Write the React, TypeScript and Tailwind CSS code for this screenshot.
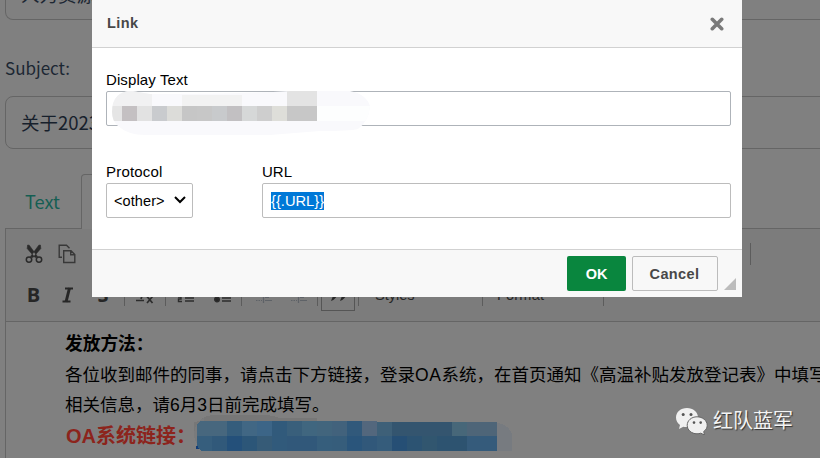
import type { ReactNode } from "react";

const CJK = "font-['Noto_Sans_CJK_SC',sans-serif]";
const UI = "font-['Liberation_Sans','Noto_Sans_CJK_SC',sans-serif]";

function Cell({ className, children }: { className: string; children?: ReactNode }) {
  return <div className={`flex shrink-0 items-center justify-center ${className}`}>{children}</div>;
}

function Sep({ className = "" }: { className?: string }) {
  return <div className={`h-[22px] w-px shrink-0 bg-[#5c5c5c] ${className}`} />;
}

function CutIcon() {
  return (
    <svg width="18" height="20" viewBox="0 0 18 20" fill="none" stroke="#2a2a2a">
      <path d="M2.6 1L4.2 1.2L12.5 12.5L10 13.5L2.2 4.5ZM15.4 1L13.8 1.2L5.5 12.5L8 13.5L15.8 4.5Z" fill="#2a2a2a" strokeWidth="0.6" />
      <circle cx="4" cy="15.6" r="2.7" strokeWidth="1.5" />
      <circle cx="14" cy="15.6" r="2.7" strokeWidth="1.5" />
    </svg>
  );
}

function CopyIcon() {
  return (
    <svg width="18" height="20" viewBox="0 0 18 20" fill="none" stroke="#383838" strokeWidth="1.4">
      <path d="M4 13.3H1.2V1.2H8.5L11.5 4.2" />
      <path d="M5.7 6.7H13L16.8 10.5V18.5H5.7Z M12.7 6.7V10.8H16.8" />
    </svg>
  );
}

function ListIcon({ kind }: { kind: "number" | "bullet" }) {
  return (
    <svg width="18" height="18" viewBox="0 0 18 18" stroke="#2c2c2c" fill="none" strokeWidth="1.4">
      <path d="M8 4.5H17M8 7.5H17M8 12H17M8 15H17" />
      {kind === "bullet" ? (
        <>
          <circle cx="3" cy="6" r="2.3" fill="#262626" />
          <circle cx="3" cy="13.5" r="2.3" fill="#262626" />
        </>
      ) : (
        <path d="M2 2H3.5V7M1 11H4V13H1.5V15.5H5" />
      )}
    </svg>
  );
}

function IndentIcon() {
  return (
    <svg width="17" height="18" viewBox="0 0 17 18" stroke="#5e6267" fill="none" strokeWidth="1.2">
      <path d="M8.5 1V17" />
      <path d="M10 4H15M10 8H15M10 11.5H14M10 14.5H17" />
      <path d="M1 14.5H7" strokeDasharray="1.5 1" />
    </svg>
  );
}

function EditorPage() {
  return (
    <div className="flex h-[458px] w-[820px] flex-col overflow-hidden bg-[#808080]">
      <div className={`ml-[5px] flex h-[20px] w-[830px] shrink-0 items-end rounded-b-[8px] border border-t-0 border-[#656565] pl-[15px] text-[18.5px] text-[#1c2733] ${CJK}`}>
        <span className="mb-[12px] leading-[26px]">人力资源部</span>
      </div>
      <div className={`ml-[5px] h-[76px] shrink-0 pt-[34px] text-[17px] leading-[28px] text-[#1c2733] ${CJK}`}>Subject:</div>
      <div className={`ml-[5px] flex h-[53px] w-[830px] shrink-0 items-center rounded-[8px] border border-[#656565] pl-[15px] text-[18.5px] text-[#17202c] ${CJK}`}>
        关于2023年高温补贴发放通知
      </div>
      <div className="ml-[5px] mt-[25px] flex h-[55px] shrink-0">
        <div className={`flex w-[76px] items-center border-b border-[#656565] pl-[20px] pt-[2px] text-[18.2px] text-[#155e53] ${CJK}`}>Text</div>
        <div className="w-[100px] rounded-t-[4px] border border-b-0 border-[#656565]" />
        <div className="flex-1 border-b border-[#656565]" />
      </div>
      <div className="ml-[5px] h-[93px] shrink-0 border-b border-l border-[#656565] bg-[#7c7c7c]">
        <div className="flex h-[50px] items-center">
          <Cell className="ml-[11px] w-[34px]"><CutIcon /></Cell>
          <Cell className="w-[32px]"><CopyIcon /></Cell>
          <Sep className="ml-[667px]" />
        </div>
        <div className={`mt-px flex h-[30px] items-center text-[#262626] ${UI}`}>
          <Cell className="ml-[10px] w-[35px] text-[20px] font-bold font-['Open_Sans',sans-serif]">B</Cell>
          <Cell className="w-[33px]">
            <svg width="14" height="16" viewBox="0 0 14 16" fill="none" stroke="#262626">
              <path d="M4 1.5H12M1.5 14.5H9.5" strokeWidth="2" />
              <path d="M8.5 1L5 15" strokeWidth="3" />
            </svg>
          </Cell>
          <Cell className="w-[38px] text-[20px] font-bold line-through font-['Open_Sans',sans-serif]">S</Cell>
          <Sep className="ml-[2px]" />
          <Cell className="w-[40px]">
            <svg width="18" height="20" viewBox="0 0 18 20" fill="none" stroke="#2c2c2c" strokeWidth="1.7">
              <path d="M3 2H14M9 2L5 14M0 15.5H8M11 11.5L16.5 18M16.5 11.5L11 18" />
            </svg>
          </Cell>
          <Sep />
          <Cell className="w-[40px]"><ListIcon kind="number" /></Cell>
          <Cell className="w-[33px]"><ListIcon kind="bullet" /></Cell>
          <Sep className="ml-[2px]" />
          <Cell className="w-[42px]"><IndentIcon /></Cell>
          <Cell className="w-[29px]"><IndentIcon /></Cell>
          <Sep className="ml-[4px]" />
          <Cell className="-mt-[2px] ml-[3px] h-[34px] w-[34px] self-center border border-[#555]">
            <svg className="mt-[4px]" width="18" height="14" viewBox="0 0 18 14" fill="#262626">
              <path d="M2 1H8V6Q7 10 2 12L4 7H2ZM11 1H17V6Q16 10 11 12L13 7H11Z" />
            </svg>
          </Cell>
          <Sep className="ml-[3px]" />
          <div className="ml-[16px] w-[107px] pt-[2px] text-[14.5px]">Styles</div>
          <Sep />
          <div className="ml-[14px] w-[106px] pt-[2px] text-[14.5px] tracking-[0.2px]">Format</div>
          <Sep />
        </div>
      </div>
      <div className={`ml-[5px] flex-1 whitespace-nowrap border-l border-[#656565] pl-[59px] pt-[7px] text-[17.5px] leading-[30.7px] text-black ${UI}`}>
        <p className="text-[17.7px] font-bold">发放方法：</p>
        <p>各位收到邮件的同事，请点击下方链接，登录<span className="tracking-[0.6px]">OA</span>系统，在首页通知《高温补贴发放登记表》中填写</p>
        <p>相关信息，请6月3日前完成填写。</p>
        <p className="pl-px text-[20px] font-bold text-[#8c241c]">OA系统链接：</p>
      </div>
    </div>
  );
}

const linkTop = ["#47677e", "#47677e", "#355d7c", "#416784", "#3c6587", "#315a7b", "#395f7b", "#40667f", "#42657d", "#42627c", "#31597b", "#53677d", "#3e6078", "#34556f", "#34556f", "#34556f", "#34556f", "#476779", "#4e6578", "#4e6578"];
const linkLow = ["#365e7d", "#31597a", "#24507a", "#2c5678", "#365b77", "#315a7b", "#31587a", "#31587a", "#365e7c", "#365d7b", "#2a557b", "#31587a", "#355c7b", "#264f75", "#2c5372", "#31566f", "#2d5370", "#2d5370", "#355b7b", "#355b7b"];

function LinkRedaction() {
  return (
    <svg className="absolute left-[194px] top-[413px]" width="320" height="40" viewBox="194 413 320 40" shapeRendering="crispEdges">
      <path d="M194 434Q196 415 216 415H262Q274 415 279 418H317V422H194Z" fill="#777" />
      <path d="M194 434Q195 421 204 418V448Q195 447 194 434Z" fill="#7a7b7c" />
      <path d="M497 423Q508 424 512 434V451H497Z" fill="#777b80" />
      {linkTop.map((c, i) => <rect key={i} x={197 + i * 15} y={i < 12 ? 421 : 422} width="15" height="15" fill={c} />)}
      {linkLow.map((c, i) => <rect key={i} x={197 + i * 15} y="436" width="15" height="15" fill={c} />)}
      <path d="M196 446L201 451H196Z" fill="#808080" />
      <path d="M196 446H198L199 449H196Z" fill="#123d78" />
      <path d="M197 421H200L197 425Z" fill="#777" />
    </svg>
  );
}

const nameLow: [number, number, string][] = [
  [112, 10, "#e5e5e5"], [122, 15, "#c4c0c2"], [137, 15, "#e2e2e2"], [152, 15, "#c9cbce"], [167, 15, "#dcdcd9"],
  [182, 15, "#c6c6c6"], [197, 15, "#c7c7c7"], [212, 15, "#c8cacc"], [227, 15, "#c2c0c2"], [242, 15, "#d6d8d8"],
  [257, 15, "#cecece"], [272, 15, "#deded9"], [287, 30, "#c7c7c7"], [317, 54, "#fdfefe"],
];

function NameRedaction() {
  return (
    <svg className="absolute left-[18px] top-[89px]" width="262" height="48" viewBox="110 89 262 48">
      <clipPath id="smear">
        <path d="M112 112Q112 91 132 91L150 94Q240 94 290 91H350Q366 94 370 106Q369 121 358 129Q350 131 320 131L270 135H145Q128 135 118 126Q112 121 112 112Z" />
      </clipPath>
      <g clipPath="url(#smear)" shapeRendering="crispEdges">
        <rect x="110" y="89" width="262" height="48" fill="#f9f9fc" />
        <rect x="110" y="89" width="42" height="17" fill="#f1f1f2" />
        <rect x="182" y="95" width="60" height="11" fill="#f2f2f2" />
        <rect x="287" y="89" width="30" height="17" fill="#e3e3e3" />
        {nameLow.map(([x, w, c]) => <rect key={x} x={x} y="106" width={w} height="15" fill={c} />)}
      </g>
    </svg>
  );
}

function LinkDialog() {
  return (
    <div className={`absolute left-[92px] top-0 flex h-[297px] w-[650px] flex-col bg-white text-[15px] leading-[18px] text-black ${UI}`}>
      <div className="flex h-[48px] items-center justify-between border-b border-[#d1d1d1] bg-[#f8f8f8] pl-[15px] pr-[18px] text-[#484848]">
        <span className="mb-[2px] text-[14.5px] font-bold tracking-[0.4px]">Link</span>
        <svg className="mt-px" width="14" height="14" viewBox="0 0 14 14" stroke="#7a7a7a" strokeWidth="3.6" strokeLinecap="round">
          <path d="M2.3 2.3L11.7 11.7M11.7 2.3L2.3 11.7" />
        </svg>
      </div>
      <div className="flex h-[201px] flex-col pl-[14px] pr-[11px] pt-[23px]">
        <label className="tracking-[0.1px]">Display Text</label>
        <div className="mt-[2px] h-[35px] rounded-[2px] border border-[#aeb3b9]" />
        <div className="mt-[37px] flex">
          <div className="w-[156px]">
            <label className="block tracking-[0.2px]">Protocol</label>
            <div className="mt-[2px] flex h-[35px] w-[87px] items-center justify-between rounded-[2px] border border-[#bcbcbc] pl-[7px] pr-[6px]">
              <span className="text-[14.5px] tracking-[0.1px]">&lt;other&gt;</span>
              <svg className="-mt-[2px]" width="12" height="8" viewBox="0 0 12 8" fill="none" stroke="#000" strokeWidth="2">
                <path d="M1 1L6 6L11 1" />
              </svg>
            </div>
          </div>
          <div className="flex-1">
            <label className="block">URL</label>
            <div className="mt-[2px] flex h-[35px] items-center rounded-[2px] border border-[#bcbcbc] pl-[8px]">
              <span className="bg-[#0078d7] text-[14.7px] text-white">{"{{.URL}}"}</span>
            </div>
          </div>
        </div>
      </div>
      <div className="flex h-[48px] items-center justify-end border-t border-[#d1d1d1] bg-[#f8f8f8] pr-[6px] text-[14.5px] font-bold">
        <div className="flex h-[35px] w-[59px] items-center justify-center rounded-[2px] bg-[#09863e] text-white">OK</div>
        <div className="ml-[6px] flex h-[35px] w-[86px] items-center justify-center rounded-[2px] border border-[#bcbcbc] pr-px text-[#484848] tracking-[0.4px]">Cancel</div>
        <svg className="ml-[6px] mt-[20px]" width="12" height="12" viewBox="0 0 12 12">
          <path d="M12 0V12H0Z" fill="#bcbcbc" />
        </svg>
      </div>
      <NameRedaction />
    </div>
  );
}

function Watermark() {
  return (
    <div className={`absolute left-[675px] top-[405px] flex items-center text-[20px] leading-[30px] text-[#f4f4f4] [text-shadow:1px_1px_1px_#333] ${CJK}`}>
      <svg width="33" height="30" viewBox="0 0 33 30" fill="#f0f0f0">
        <path d="M12 3C5.6 3 1 7.1 1 12.5C1 15.7 2.5 18.3 5 20L4 24L8.3 21.7C9.5 22 10.8 22.2 12 22C18 22 23 18 23 12.5C23 7.1 18 3 12 3Z" />
        <circle cx="8.2" cy="9.5" r="1.5" fill="#555" />
        <circle cx="16" cy="9.5" r="1.5" fill="#555" />
        <path d="M22 11.8C16.5 11.8 12.2 15.5 12.2 20.3C12.2 25 16.5 28.8 22 28.8C23.3 28.8 24.6 28.6 25.8 28.2L29.5 30L28.7 26.5C31 25 32.2 22.8 32.2 20.3C32.2 15.5 27.5 11.8 22 11.8Z" stroke="#666" strokeWidth="1" />
        <circle cx="19" cy="17.6" r="1.3" fill="#555" />
        <circle cx="25.7" cy="17.6" r="1.3" fill="#555" />
      </svg>
      <span className="ml-[5px]">红队蓝军</span>
    </div>
  );
}

export default function App() {
  return (
    <div className="relative h-[458px] w-[820px] overflow-hidden">
      <EditorPage />
      <LinkRedaction />
      <LinkDialog />
      <Watermark />
    </div>
  );
}
